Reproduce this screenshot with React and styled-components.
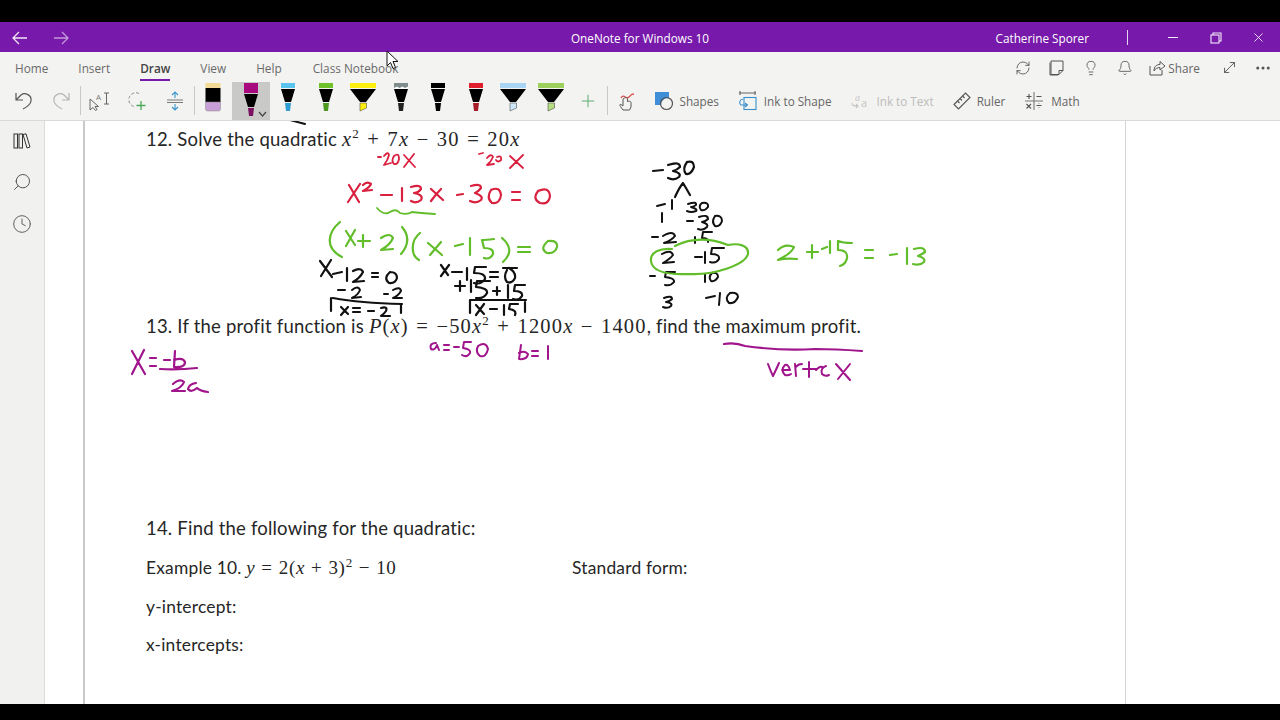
import React from "react";
import styled, { createGlobalStyle } from "styled-components";
import {
  Plus,
  RefreshCw,
  Lightbulb,
  Bell,
  Ellipsis,
  MoveDiagonal,
  X,
  Search,
  Clock,
} from "lucide-react";

const GlobalStyle = createGlobalStyle`
  html, body { margin: 0; padding: 0; background: #000; }
  #root { width: 1280px; height: 720px; overflow: hidden; }
  * { box-sizing: border-box; }
`;

const Screen = styled.div`
  width: 1280px;
  height: 720px;
  display: flex;
  flex-direction: column;
  background: #000;
  padding-top: 22px;
  padding-bottom: 16px;
  font-family: "Open Sans", "Liberation Sans", sans-serif;
`;

const TitleBar = styled.header`
  height: 30px;
  flex: none;
  background: #7719aa;
  color: #fff;
  display: grid;
  grid-template-columns: 1fr auto 1fr;
  align-items: center;
  font-size: 11.75px;
  padding-top: 1px;
`;

const NavArrows = styled.div`
  display: flex;
  align-items: center;
  gap: 25px;
  padding-left: 12px;
`;

const ArrowIcon = styled.svg`
  width: 16px;
  height: 14px;
  fill: none;
  stroke: ${(p) => (p.$dim ? "#c49ad8" : "#f2e6f7")};
  stroke-width: 1.3;
`;

const TitleRight = styled.div`
  display: flex;
  align-items: center;
  justify-content: flex-end;
`;

const UserName = styled.span`
  margin-right: 38px;
`;

const TitleSep = styled.span`
  width: 1px;
  height: 15px;
  background: #e6d5ee;
  margin-right: 23px;
`;

const WinBtn = styled.span`
  width: 43px;
  display: flex;
  justify-content: center;
  color: #fff;
`;

const MinimizeBar = styled.span`
  width: 10px;
  height: 1px;
  background: #f4ecf8;
`;

const RestoreIcon = styled.svg`
  width: 12px;
  height: 12px;
  fill: none;
  stroke: #f4ecf8;
  stroke-width: 1.1;
`;

const Ribbon = styled.section`
  height: 69px;
  flex: none;
  background: #f3f3f1;
  border-bottom: 1px solid #d9d9d7;
  display: flex;
  flex-direction: column;
`;

const TabRow = styled.div`
  height: 30px;
  flex: none;
  display: flex;
  justify-content: space-between;
  padding: 1px 0 0 15px;
`;

const Tabs = styled.nav`
  display: flex;
  gap: 30px;
`;

const Tab = styled.span`
  position: relative;
  font-size: 11.8px;
  line-height: 31px;
  color: ${(p) => (p.$active ? "#444" : "#6a6a6a")};
  font-weight: ${(p) => (p.$active ? 600 : 400)};
  &:last-child {
    margin-left: 1px;
  }
  &::after {
    content: "";
    display: ${(p) => (p.$active ? "block" : "none")};
    position: absolute;
    left: 0;
    right: 0;
    bottom: 1px;
    height: 2px;
    background: #7719aa;
  }
`;

const RibbonActions = styled.div`
  display: flex;
  align-items: center;
  color: #555;
`;

const ActionIcon = styled.span`
  width: 34px;
  display: flex;
  justify-content: center;
  color: #555;
`;

const ShareGroup = styled.span`
  display: flex;
  align-items: center;
  gap: 2px;
  margin: 0 12px 0 7px;
  font-size: 11.8px;
  color: #666;
`;

const ToolRow = styled.div`
  height: 38px;
  flex: none;
  display: flex;
  align-items: flex-start;
  padding-left: 5px;
`;

const IconSlot = styled.span`
  width: 37.5px;
  height: 37px;
  flex: none;
  display: flex;
  align-items: center;
  justify-content: center;
  color: ${(p) => p.$color || "#555"};
`;

const ToolSep = styled.span`
  width: 1px;
  height: 29px;
  flex: none;
  margin-top: 4px;
  background: #c9c9c7;
`;

const PenSlot = styled.span`
  position: relative;
  width: 37.5px;
  height: 38px;
  flex: none;
  padding-top: 1px;
  background: ${(p) => (p.$selected ? "#c9c9c7" : "transparent")};
  display: flex;
  justify-content: center;
`;

const Chevron = styled.svg`
  position: absolute;
  right: 3px;
  bottom: 3px;
  width: 9px;
  height: 6px;
  fill: none;
  stroke: #444;
  stroke-width: 1.2;
`;

const LabelTool = styled.span`
  display: flex;
  align-items: center;
  height: 37px;
  flex: none;
  gap: ${(p) => p.$gap || 6}px;
  margin-left: ${(p) => p.$left}px;
  font-size: 11.7px;
  color: ${(p) => (p.$off ? "#bcbcba" : "#666")};
`;

const Body = styled.main`
  position: relative;
  flex: 1;
  display: flex;
  background: #fff;
  overflow: hidden;
`;

const Sidebar = styled.aside`
  width: 45px;
  flex: none;
  background: #f1f1ef;
  border-right: 1px solid #dcdcda;
  display: flex;
  flex-direction: column;
  align-items: center;
  gap: 22.5px;
  padding-top: 12px;
  color: #555;
`;

const SearchIcon = styled(Search)`
  transform: scaleX(-1);
`;

const Gutter = styled.div`
  width: 38px;
  flex: none;
`;

const Page = styled.article`
  width: 1043px;
  flex: none;
  border-left: 2px solid #c9c9c9;
  border-right: 1px solid #d5d5d5;
  padding-left: 61px;
  color: #262626;
  font-family: Lato, "Liberation Sans", sans-serif;
  letter-spacing: 0.2px;
`;

const Line = styled.p`
  margin: ${(p) => p.$top}px 0 0;
  height: 24px;
  line-height: 24px;
  font-size: ${(p) => (p.$small ? 17.4 : 18.5)}px;
  white-space: pre;
  display: flex;
`;

const Cell = styled.span`
  display: inline-block;
  width: ${(p) => p.$w}px;
`;

const Math = styled.span`
  font-family: "Liberation Serif", serif;
  font-size: ${(p) => (p.$small ? 19 : 20.5)}px;
  letter-spacing: ${(p) => (p.$small ? 0.7 : 1.15)}px;
  word-spacing: ${(p) => (p.$small ? 0.5 : 1.2)}px;
  i { font-style: italic; }
  sup { font-size: 13px; line-height: 0; }
`;

const InkLayer = styled.svg`
  position: absolute;
  left: 0;
  top: 0;
  fill: none;
  stroke-linecap: round;
  stroke-linejoin: round;
  pointer-events: none;
`;

const Pointer = styled.svg`
  position: absolute;
  left: 386px;
  top: 50px;
  width: 13px;
  height: 20px;
`;

const Fixed = styled.div`
  position: relative;
`;

/* pens in the draw tab */
const Pen = ({ band, tip, wide, top }) =>
  wide ? (
    <svg width="30" height="30" viewBox="0 0 30 30">
      <rect x="2" y="0" width="26" height="5" fill={band} />
      <path d="M2 6H28L18 19H12Z" fill="#000" />
      <path d="M12 20H18.500V25L12 28Z" fill={tip} stroke="#333" strokeWidth=".5" />
    </svg>
  ) : (
    <svg width="18" height="30" viewBox="0 0 18 30">
      <rect x="2" y="0" width="14" height="5" fill={band} />
      {top && <path d="M2 5l3-1.500 2.500 1.500 3-1.500 2.500 1.500 3-1.500V6H2Z" fill="#fff" />}
      <path d="M2 6H16L12 19H6Z" fill="#000" />
      <path d="M6 20H12L11 28H7Z" fill={tip} />
    </svg>
  );

const SelectedPen = () => (
  <svg width="18" height="36" viewBox="0 0 18 36">
    <rect x="2" y="0" width="14" height="10" fill="#a8097f" />
    <path d="M2 11H16L12 24H6Z" fill="#000" />
    <path d="M6 25H12L11 33H7Z" fill="#7c1060" />
  </svg>
);

const Eraser = () => (
  <svg width="18" height="30" viewBox="0 0 18 30">
    <rect x="1.500" y="0" width="15" height="5" fill="#f2d996" />
    <rect x="1.500" y="5" width="15" height="14" fill="#000" />
    <path d="M1.500 19H16.500V26a2 2 0 0 1-2 2H3.500a2 2 0 0 1-2-2Z" fill="#c99fd8" stroke="#888" strokeWidth=".5" />
  </svg>
);

const UndoIcon = ({ flip }) => (
  <svg
    width="20"
    height="20"
    viewBox="0 0 20 20"
    fill="none"
    stroke="currentColor"
    strokeWidth="1.200"
    transform={flip ? "scale(-1 1)" : undefined}
  >
    <path d="M2 2V9H9M2 9L7 4C11 1 18 4 17 10C16.500 14 13 16 9 18" />
  </svg>
);

const TextSelect = () => (
  <svg width="22" height="20" viewBox="0 0 22 20" fill="none" stroke="#666" strokeWidth="1">
    <path d="M1 8V19L4 16.500L6.500 19.500L8 18.500L6 15.500H9.500Z" fill="#f3f3f1" />
    <path d="M15 2h5M17.500 2V13M15 13h5" />
    <text x="7" y="9" fontSize="8" fill="#777" stroke="none" fontFamily="Open Sans">A</text>
  </svg>
);

const Lasso = () => (
  <svg width="20" height="20" viewBox="0 0 20 20" fill="none">
    <path d="M12 2.500A7 7 0 1 0 7 15.500" stroke="#888" strokeWidth="1" strokeDasharray="3 2" />
    <path d="M14 10V19M9.500 14.500H18.500" stroke="#4da85a" strokeWidth="1.300" />
  </svg>
);

const Spacing = () => (
  <svg width="18" height="20" viewBox="0 0 18 20" fill="none" stroke="#3a96cc" strokeWidth="1.100">
    <path d="M9 1V7M6 4l3-3 3 3M9 19V13M6 16l3 3 3-3" />
    <path d="M1 9H17M1 11.500H17" stroke="#7a7a7a" />
  </svg>
);

const TouchInk = () => (
  <svg width="20" height="22" viewBox="0 0 20 22" fill="none">
    <path d="M4 8c3-5 5 2 8-1s3-3 5-3" stroke="#d9534f" strokeWidth="1.300" />
    <path d="M6 9V16L4 14.500C2.500 14 2.500 15.500 3.500 16.500L6 20H12.500L14 17V12.500C14 11 11 11 10.500 11.500V9C10.500 7.500 8 7 6 9Z" stroke="#555" strokeWidth="1" fill="#f3f3f1" />
  </svg>
);

const ShapesIcon = () => (
  <svg width="20" height="20" viewBox="0 0 20 20" fill="none">
    <path d="M1 1H15V7.500A6.500 6.500 0 0 0 7 14H1Z" fill="#3f8fd8" />
    <circle cx="12.500" cy="12.500" r="6" stroke="#555" strokeWidth="1.200" />
  </svg>
);

const InkShapeIcon = () => (
  <svg width="20" height="20" viewBox="0 0 20 20" fill="none" stroke="#3a8ecb" strokeWidth="1.100">
    <path d="M1 2H18M2 0V4M17 0V4" stroke="#666" />
    <rect x="6" y="6.500" width="12" height="12" />
    <path d="M5 8C1 9 1 12 3 14H9M7 12l2.500 2L7 16" />
  </svg>
);

const InkTextIcon = () => (
  <svg width="20" height="20" viewBox="0 0 20 20" fill="none" stroke="#c5c5c3" strokeWidth="1.100">
    <path d="M1 12c0 3 2 3 6 3M5 13l2 2-2 2" />
    <text x="4" y="10" fontSize="10" fontStyle="italic" fill="#c5c5c3" stroke="none" fontFamily="Liberation Serif">a</text>
    <text x="10" y="16" fontSize="11" fill="#c5c5c3" stroke="none" fontFamily="Open Sans">a</text>
  </svg>
);

const RulerIcon = () => (
  <svg width="18" height="18" viewBox="0 0 18 18" fill="none" stroke="#555" strokeWidth="1.100">
    <path d="M1 12.500L12.500 1L17 5.500L5.500 17Z" />
    <path d="M4.500 9L6.500 11M7 6.500L9 8.500M9.500 4L11.500 6" />
  </svg>
);

const MathIcon = () => (
  <svg width="18" height="18" viewBox="0 0 18 18" fill="none" stroke="#555" strokeWidth="1.100">
    <path d="M9 0V18M0 9H18" stroke="#777" />
    <path d="M1.500 4.500H6.500M4 2V7M11.500 4.500H16.500M1.500 12L6 16.500M6 12L1.500 16.500M11.500 13.500H16.500" />
    <path d="M14 11.500v.6M14 15v.6" />
  </svg>
);

const NotesIcon = () => (
  <svg width="16" height="16" viewBox="0 0 16 16" fill="none" stroke="#555" strokeWidth="1">
    <path d="M2 1H14V10.500L10 14.500H2Z" />
    <path d="M10 14.500V10.500H14M1 2.500V15H9" />
  </svg>
);

const ShareIcon = () => (
  <svg width="17" height="16" viewBox="0 0 17 16" fill="none" stroke="#555" strokeWidth="1">
    <path d="M1 6V15H13V10" />
    <path d="M5 11C5 6 8 4.500 11 4.500V1.500L16 6L11 10V7.500C8.500 7.500 6.500 8.500 5 11Z" />
  </svg>
);

const BooksIcon = () => (
  <svg width="18" height="16" viewBox="0 0 18 16" fill="none" stroke="#333" strokeWidth="1">
    <rect x="1" y="1" width="3.500" height="14" />
    <rect x="6" y="1" width="3.500" height="14" />
    <path d="M10 1.500L13 .8L17 14L14 15Z" />
  </svg>
);

/* handwriting on the page, drawn as ink strokes in screen coordinates */
const RED = "#d9213f";
const GREEN = "#62bd2b";
const BLACK = "#111";
const MAGENTA = "#a0148c";

const inkStrokes = [
  { c: BLACK, w: 2, d: "M290 120L305 124" },
  { c: GREEN, w: 1.5, d: "M457 120H459" },
  // -20x -20x
  { c: RED, w: 1.8, d: "M378 157H381M384 156Q388 151 389 155Q388 160 384 165L391 163M394 156Q399 152 399 159Q398 165 394 164Q391 161 394 156M404 155L415 167M414 154L404 167" },
  { c: RED, w: 1.8, d: "M479 154L483 153M487 158Q491 153 493 157Q491 162 487 165L494 164M497 157Q502 155 501 160Q498 163 496 160M510 156L523 168M523 155L510 168" },
  // x2 - 13x - 30 = 0
  { c: RED, w: 2.2, d: "M349 185L359 202M360 184L348 202M363 185Q367 181 371 184Q369 188 363 191L372 190M381 195H392M402 188V201M411 187Q421 184 421 189Q418 193 414 193Q424 195 421 200Q416 204 411 201M431 189L443 200M441 189Q436 194 431 201M457 195L463 194M471 186Q481 183 481 188Q478 192 475 193Q484 196 481 200Q476 204 470 201M491 190Q500 186 501 195Q500 204 492 203Q486 198 491 190M512 192H520M512 200H520M538 191Q549 186 550 196Q549 205 540 203Q532 199 538 191" },
  { c: GREEN, w: 1.8, d: "M377 208Q384 216 390 212Q396 208 400 213Q407 215 412 212Q420 213 435 214" },
  // (x+2)(x-15)=0
  { c: GREEN, w: 2.2, d: "M340 222C328 232 324 248 342 257M346 231L355 245M355 230L346 246M358 241H370M363 235V247M381 238Q390 232 393 238Q390 245 381 250L393 249M402 227Q413 240 401 254M420 233C411 240 410 255 419 260M428 243L442 255M441 242L430 255M455 246L463 244M470 238V255M494 239Q486 240 482 240L484 248Q494 248 493 254Q490 260 484 258M502 238Q516 250 503 262M518 247H530M518 252H530M548 241Q558 240 557 247Q555 254 547 253Q539 249 548 241" },
  // x-12=0 column
  { c: BLACK, w: 2.2, d: "M320 261L332 277M331 260L321 276M333 274L342 272M347 268V281M353 271Q361 267 363 272Q360 278 353 282L364 281M372 273H378M372 277H378M390 272Q397 272 397 278Q395 284 389 283Q383 278 390 272" },
  { c: BLACK, w: 2, d: "M338 290H345M352 290Q358 285 360 290Q358 295 352 298L361 297M384 294H388M393 290Q400 286 401 291Q398 296 393 298L402 298" },
  { c: BLACK, w: 2.2, d: "M331 298V311M333 298Q360 303 402 304M401 304V313M341 307L348 314M348 307L341 315M353 308H360M353 312H360M368 311H374M381 308Q388 306 386 311Q384 314 381 316L390 316" },
  // x-15=0 column
  { c: BLACK, w: 2.2, d: "M441 265L448 275M449 265L441 276M452 272H462M467 268V280M486 267H475L474 273Q486 273 485 279Q481 285 474 283M490 272H498M490 277H498M503 268H517M509 268Q516 272 515 278Q512 284 507 282Q503 277 507 270" },
  { c: BLACK, w: 2.2, d: "M455 286H465M460 281V291M471 280V292M490 281H477L476 287Q488 288 487 293Q484 299 476 298M493 291H500M497 287V295M508 285V298M525 285H515L514 291Q523 291 522 296Q519 301 513 299" },
  { c: BLACK, w: 2.2, d: "M470 300V313M470 300H526M525 302V312M476 305L484 314M484 304L476 315M490 309H497M504 305V315M518 304H510L509 309Q517 310 515 315" },
  // factor tree
  { c: BLACK, w: 2.2, d: "M653 171L663 170M668 165Q680 161 680 167Q677 170 673 171Q682 173 679 177Q674 181 668 178M687 162Q694 160 694 167Q691 175 686 174Q682 169 687 162M675 197Q679 188 683 183Q686 188 690 195" },
  { c: BLACK, w: 2, d: "M657 206L665 204M672 200V209M688 204Q697 201 696 205Q693 207 691 207Q698 209 696 211Q691 213 687 211M702 203Q709 202 708 207Q705 211 701 210Q698 206 702 203" },
  { c: BLACK, w: 2, d: "M662 213V222M687 221H693M699 217Q708 214 708 219Q705 222 702 222Q709 224 707 227Q703 231 698 229M715 216Q722 215 722 221Q720 227 715 226Q711 222 715 216" },
  { c: BLACK, w: 2, d: "M652 237H658M663 236Q673 230 675 236Q672 240 664 243L676 242M695 237V243M712 232H703L702 238Q709 238 708 242" },
  { c: BLACK, w: 2, d: "M662 254Q671 249 673 255Q670 259 663 263L674 262M695 257H702M705 252V263M724 248H712L711 254Q720 254 719 259Q716 264 710 262" },
  { c: BLACK, w: 2, d: "M650 276H655M675 272H666L665 277Q675 278 674 282Q671 286 665 285M705 274V282M712 273Q718 272 718 277Q715 282 711 281Q708 277 712 273" },
  { c: BLACK, w: 2, d: "M664 298Q672 295 672 299Q669 302 666 302Q673 303 671 306Q668 309 663 307M706 298L715 296M720 293L719 305M730 293Q738 292 738 297Q735 304 729 303Q724 298 730 293" },
  { c: GREEN, w: 2.2, d: "M672 249C660 248 650 252 651 261C652 272 668 275 690 274C715 275 745 265 748 254C749 245 738 243 728 245C715 240 695 236 675 246" },
  // 2 + -15 = -13
  { c: GREEN, w: 2.2, d: "M778 250Q785 243 794 247Q792 253 778 260Q785 258 797 259M807 252H818M812 245V258M822 249L827 247M830 241V253M852 243Q843 243 838 241V250Q848 250 847 258Q846 264 840 266M865 250H873M865 258H873M890 255L897 254M907 248V264M914 249Q925 246 925 252Q921 255 918 256Q926 258 924 262Q920 266 913 264" },
  // x = -b / 2a
  { c: MAGENTA, w: 2.2, d: "M132 351L145 374M144 350L132 374M150 358H156M150 366H156M164 360H170M175 351L174 367Q185 368 185 362Q183 357 174 360M160 369Q178 370 197 368M173 384Q180 378 184 382Q182 388 172 391L185 391M196 383Q189 384 188 389Q191 393 197 388Q200 391 208 392" },
  // a = -50, b = 1
  { c: MAGENTA, w: 2, d: "M436 343Q429 343 431 349Q435 351 437 345L439 350M444 345H449M444 350H449M454 347H459M471 342H464L463 348Q471 349 470 353Q467 358 462 355M478 346Q486 341 488 349Q486 358 480 356Q475 352 478 346M521 345L519 359Q527 360 528 354Q525 350 519 353M532 351H538M532 356H538M548 346V359" },
  // underline and vertex
  { c: MAGENTA, w: 2.2, d: "M724 344Q735 342 745 346Q780 351 815 349Q835 349 862 351" },
  { c: MAGENTA, w: 2, d: "M768 364Q771 372 773 376Q776 370 779 363M782 370H790Q788 364 785 365Q780 370 785 375Q788 376 791 374M795 364L796 376M796 367Q798 364 802 364M809 362V377M803 369H817M816 370Q820 366 822 367M826 366Q820 368 822 374Q825 377 829 375M836 364L850 380M850 364L838 379" },
];

const Cursor = () => (
  <Pointer viewBox="0 0 13 20">
    <path d="M1 1V16L4.500 12.500L7 18.500L9.500 17.500L7 11.500H12Z" fill="#fff" stroke="#111" strokeWidth="1" />
  </Pointer>
);

const pens = [
  { band: "#5ac4ee", tip: "#2f9fd4" },
  { band: "#6fc22c", tip: "#4c9a1e" },
  { band: "#ffee10", tip: "#ffee10", wide: true },
  { band: "#7f8c8c", tip: "#222", top: true },
  { band: "#000", tip: "#000" },
  { band: "#e01f2d", tip: "#a81c28" },
  { band: "#a9d5f5", tip: "#cfe6f9", wide: true },
  { band: "#9ccf5c", tip: "#b6dd82", wide: true },
];

const App = () => (
  <Fixed>
    <GlobalStyle />
    <Screen>
      <TitleBar>
        <NavArrows>
          <ArrowIcon viewBox="0 0 16 14">
            <path d="M15 7H1M7 1L1 7L7 13" />
          </ArrowIcon>
          <ArrowIcon $dim viewBox="0 0 16 14">
            <path d="M1 7H15M9 1L15 7L9 13" />
          </ArrowIcon>
        </NavArrows>
        <span>OneNote for Windows 10</span>
        <TitleRight>
          <UserName>Catherine Sporer</UserName>
          <TitleSep />
          <WinBtn>
            <MinimizeBar />
          </WinBtn>
          <WinBtn>
            <RestoreIcon viewBox="0 0 12 12">
              <rect x="1" y="3" width="8" height="8" />
              <path d="M3 3V1H11V9H9" />
            </RestoreIcon>
          </WinBtn>
          <WinBtn>
            <X size={15} strokeWidth={1.3} />
          </WinBtn>
        </TitleRight>
      </TitleBar>

      <Ribbon>
        <TabRow>
          <Tabs>
            <Tab>Home</Tab>
            <Tab>Insert</Tab>
            <Tab $active>Draw</Tab>
            <Tab>View</Tab>
            <Tab>Help</Tab>
            <Tab>Class Notebook</Tab>
          </Tabs>
          <RibbonActions>
            <ActionIcon><RefreshCw size={16} strokeWidth={1.3} /></ActionIcon>
            <ActionIcon><NotesIcon /></ActionIcon>
            <ActionIcon><Lightbulb size={16} strokeWidth={1.3} /></ActionIcon>
            <ActionIcon><Bell size={16} strokeWidth={1.3} /></ActionIcon>
            <ShareGroup><ShareIcon />Share</ShareGroup>
            <ActionIcon><MoveDiagonal size={17} strokeWidth={1.3} /></ActionIcon>
            <ActionIcon><Ellipsis size={18} strokeWidth={2} /></ActionIcon>
          </RibbonActions>
        </TabRow>

        <ToolRow>
          <IconSlot><UndoIcon /></IconSlot>
          <IconSlot $color="#b5b5b3"><UndoIcon flip /></IconSlot>
          <ToolSep />
          <IconSlot><TextSelect /></IconSlot>
          <IconSlot><Lasso /></IconSlot>
          <IconSlot><Spacing /></IconSlot>
          <ToolSep />
          <PenSlot><Eraser /></PenSlot>
          <PenSlot $selected>
            <SelectedPen />
            <Chevron viewBox="0 0 9 6"><path d="M1 1L4.500 5L8 1" /></Chevron>
          </PenSlot>
          {pens.map((pen, i) => (
            <PenSlot key={i}><Pen {...pen} /></PenSlot>
          ))}
          <IconSlot $color="#5fae70"><Plus size={20} strokeWidth={1.2} /></IconSlot>
          <ToolSep />
          <IconSlot><TouchInk /></IconSlot>
          <LabelTool $left={8}><ShapesIcon />Shapes</LabelTool>
          <LabelTool $left={19}><InkShapeIcon />Ink to Shape</LabelTool>
          <LabelTool $left={19} $off><InkTextIcon />Ink to Text</LabelTool>
          <LabelTool $left={19}><RulerIcon />Ruler</LabelTool>
          <LabelTool $left={20} $gap={8}><MathIcon />Math</LabelTool>
        </ToolRow>
      </Ribbon>

      <Body>
        <Sidebar>
          <BooksIcon />
          <SearchIcon size={20} strokeWidth={1.2} />
          <Clock size={20} strokeWidth={1.1} />
        </Sidebar>
        <Gutter />
        <Page>
          <Line $top={6}>
            12. Solve the quadratic <Math><i>x</i><sup>2</sup> + 7<i>x</i> − 30 = 20<i>x</i></Math>
          </Line>
          <Line $top={163}>
            13. If the profit function is <Math><i>P</i>(<i>x</i>) = −50<i>x</i><sup>2</sup> + 1200<i>x</i> − 1400</Math>, find the maximum profit.
          </Line>
          <Line $top={178}>14. Find the following for the quadratic:</Line>
          <Line $top={16} $small>
            <Cell $w={426}>Example 10. <Math $small><i>y</i> = 2(<i>x</i> + 3)<sup>2</sup> − 10</Math></Cell>
            Standard form:
          </Line>
          <Line $top={15} $small>y-intercept:</Line>
          <Line $top={14} $small>x-intercepts:</Line>
        </Page>
        <InkLayer width="1280" height="583" viewBox="0 121 1280 583">
          {inkStrokes.map((s, i) => (
            <path key={i} d={s.d} stroke={s.c} strokeWidth={s.w} />
          ))}
        </InkLayer>
      </Body>
    </Screen>
    <Cursor />
  </Fixed>
);

export default App;
